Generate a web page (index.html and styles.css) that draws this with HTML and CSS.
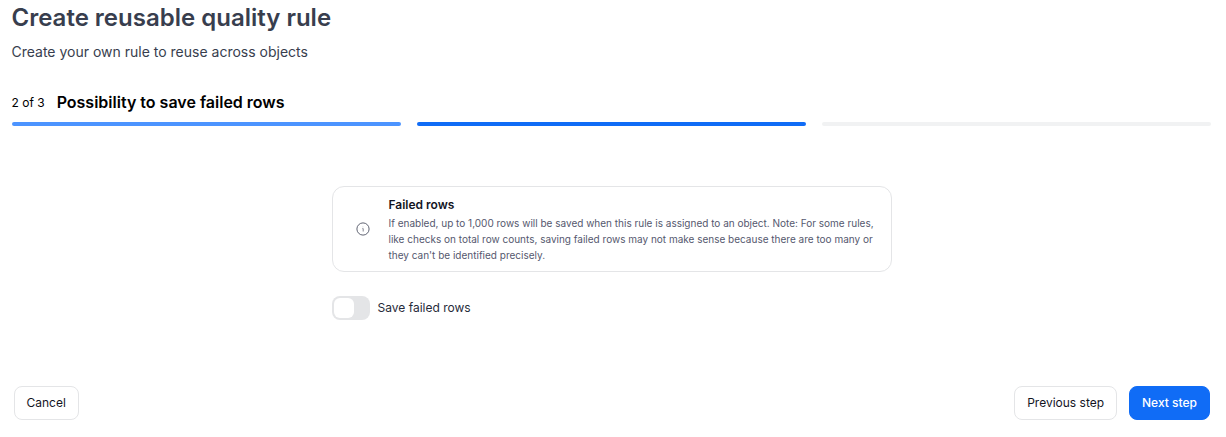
FILE: index.html
```html
<!DOCTYPE html>
<html lang="en">

<head>
    <meta charset="UTF-8" />
    <meta name="viewport" content="width=device-width, initial-scale=1.0" />
    <title>Create reusable quality rule</title>
    <link rel="stylesheet" href="styles.css">
</head>

<body>
    <header>
        <h1>Create reusable quality rule</h1>
        <p class="subtitle">Create your own rule to reuse across objects</p>
    </header>

    <div class="step-title">
        <span>2 of 3</span>
        <h2>Possibility to save failed rows</h2>
    </div>
    <div class="progress">
        <div class="bar done"></div>
        <div class="bar active"></div>
        <div class="bar"></div>
    </div>

    <main>
        <div class="info-box">
            <svg class="info-icon" width="14" height="14" viewBox="0 0 14 14" fill="none" stroke="currentColor">
                <circle cx="7" cy="7" r="6.1" stroke-width="0.9" />
                <path d="M6.4 6.6H7.2V9.5" stroke-width="0.7" />
                <path d="M6.7 4.9H7.2" stroke-width="0.5" />
            </svg>
            <div>
                <h3>Failed rows</h3>
                <p>If enabled, up to 1,000 rows will be saved when this rule is assigned to an object. Note: For some rules, like checks on total row counts, saving failed rows may not make sense because there are too many or they can't be identified precisely.</p>
            </div>
        </div>

        <label class="toggle">
            <input type="checkbox" />
            <span>Save failed rows</span>
        </label>
    </main>

    <footer>
        <button type="button">Cancel</button>
        <div class="actions">
            <button type="button">Previous step</button>
            <button type="button" class="primary">Next step</button>
        </div>
    </footer>
</body>

</html>
```
FILE: styles.css
```css
:root {
    --blue: #106cf6;
    --light-blue: #4c94ff;
    --border: #e4e5e7;
    --text: #383e4e;
}

* {
    box-sizing: border-box;
}

body {
    margin: 0;
    padding: 2px 15px 0 12px;
    font-family: Inter, sans-serif;
    background: #fff;
    color: var(--text);
}

h1,
h2,
h3,
p {
    margin: 0;
}

header,
.step-title {
    margin-left: -0.5px;
}

h1 {
    font-size: 24px;
    line-height: 32px;
    font-weight: 600;
}

.subtitle {
    margin-top: 8px;
    font-size: 14px;
    line-height: 20px;
}

.step-title {
    display: flex;
    align-items: center;
    gap: 12px;
    margin-top: 28px;
    height: 24px;
    font-size: 12px;
    color: #000;
}

h2 {
    font-size: 16px;
    line-height: 24px;
    font-weight: 600;
}

.progress {
    display: flex;
    gap: 16px;
    margin-top: 8px;
}

.bar {
    flex: 1;
    height: 4px;
    border-radius: 2px;
    background: #f1f2f3;
}

.bar.done {
    background: var(--light-blue);
}

.bar.active {
    background: var(--blue);
}

main {
    width: 560px;
    margin: 60px 0 0 320px;
}

.info-box {
    display: flex;
    align-items: center;
    height: 86px;
    padding: 0 15px 0 23px;
    border: 1px solid var(--border);
    border-radius: 12px;
}

.info-icon {
    flex: none;
    margin-right: 18.5px;
    color: #4f5263;
}

h3 {
    font-size: 12px;
    line-height: 20px;
    font-weight: 600;
    color: #14151f;
}

.info-box p {
    font-size: 10px;
    line-height: 16px;
    color: #55586e;
}

.toggle {
    display: flex;
    align-items: center;
    gap: 7.5px;
    width: max-content;
    margin-top: 24px;
    font-size: 12px;
    color: #272b3a;
}

.toggle span {
    padding-bottom: 2px;
}

.toggle input {
    appearance: none;
    width: 38px;
    height: 24px;
    margin: 0;
    padding: 2px;
    border-radius: 8px;
    background: #e4e5e7;
}

.toggle input::before {
    content: "";
    display: block;
    width: 20px;
    height: 20px;
    border-radius: 6px;
    background: #fff;
}

.toggle input:checked {
    padding-left: 16px;
    background: var(--blue);
}

footer {
    display: flex;
    justify-content: space-between;
    margin-top: 66px;
    padding: 0 1px 0 2px;
}

.actions {
    display: flex;
    gap: 12px;
}

button {
    height: 34px;
    padding: 0 12px 2px 11.5px;
    border: 1px solid var(--border);
    border-radius: 8px;
    background: #fff;
    font-family: inherit;
    font-size: 12px;
    color: #14151f;
}

.actions button {
    padding: 0 12px 2px;
}

button.primary {
    border-color: var(--blue);
    background: var(--blue);
    font-weight: 500;
    color: #fff;
}
```
